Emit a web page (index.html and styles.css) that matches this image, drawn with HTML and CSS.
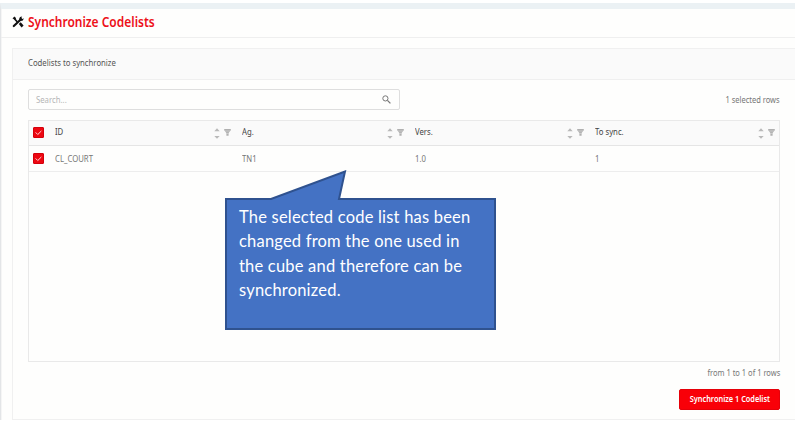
FILE: index.html
```html
<!DOCTYPE html>
<html lang="en">
<head>
<meta charset="utf-8">
<title>Synchronize Codelists</title>
<link rel="stylesheet" href="styles.css">
</head>
<body>
<svg class="defs" width="0" height="0">
  <symbol id="tools" viewBox="0 0 12 12"><path d="M2 2.2 5.4 6" stroke="#111" stroke-width="1.7"/><path d="M9 3.2 1.8 10" stroke="#111" stroke-width="2.2" stroke-linecap="round"/><path d="M.5 2.4 2.3.6 4 2 3.6 3.8Z" fill="#111"/><path d="M10.2.6 8 1 7 3.3 8.5 5 10.9 4.5 11.8 2.3 10.2 3.1 9.2 2.3Z" fill="#111"/><path d="m6.8 8 1.9-1.7 2.9 3.2-2 1.9Z" fill="#111"/></symbol>
  <symbol id="sort" viewBox="0 0 6 11"><path d="M.3 3.3 3 .2 5.7 3.3ZM.3 8 3 10.8 5.7 8Z" fill="#b9b9b9"/></symbol>
  <symbol id="filter" viewBox="0 0 7 7"><path d="M.2 0h6.6v1.3L4.6 4v2.7H2.4V4L.2 1.3Z" fill="#b0b0b0"/><path d="M1 2h5M2.2 4.4h2.6" stroke="#ddd" stroke-width=".6"/></symbol>
</svg>
<main class="page">
  <header class="title-bar">
    <svg class="tools"><use href="#tools"/></svg>
    <h1><span class="title-text">Synchronize Codelists</span></h1>
  </header>
  <section class="card">
    <div class="card-head"><span class="t">Codelists to synchronize</span></div>
    <div class="card-body">
      <div class="toolbar">
        <div class="search"><span class="t">Search...</span>
          <svg width="9" height="9" viewBox="0 0 9 9" fill="none" stroke="#777"><circle cx="3.4" cy="3.4" r="2.6"/><path d="m5.4 5.4 3 3" stroke-width="1.3"/></svg>
        </div>
        <span class="t right">1 selected rows</span>
      </div>
      <div class="table">
        <div class="row head">
          <div class="cell"><i class="check"><svg viewBox="0 0 11 11"><path d="M2 5.4 4.6 8 9 3.6"/></svg></i></div>
          <div class="cell"><span class="t">ID</span><svg class="sort"><use href="#sort"/></svg><svg class="filter"><use href="#filter"/></svg></div>
          <div class="cell"><span class="t">Ag.</span><svg class="sort"><use href="#sort"/></svg><svg class="filter"><use href="#filter"/></svg></div>
          <div class="cell"><span class="t">Vers.</span><svg class="sort"><use href="#sort"/></svg><svg class="filter"><use href="#filter"/></svg></div>
          <div class="cell"><span class="t">To sync.</span><svg class="sort"><use href="#sort"/></svg><svg class="filter"><use href="#filter"/></svg></div>
        </div>
        <div class="row">
          <div class="cell"><i class="check"><svg viewBox="0 0 11 11"><path d="M2 5.4 4.6 8 9 3.6"/></svg></i></div>
          <div class="cell"><span class="t">CL_COURT</span></div>
          <div class="cell"><span class="t">TN1</span></div>
          <div class="cell"><span class="t">1.0</span></div>
          <div class="cell"><span class="t">1</span></div>
        </div>
      </div>
      <div class="range"><span class="t right">from 1 to 1 of 1 rows</span></div>
      <div class="actions"><button><span class="t">Synchronize 1 Codelist</span></button></div>
    </div>
  </section>
</main>
<aside class="callout">
  <svg width="271" height="161" viewBox="0 0 271 161"><path d="M1 29H46L120 1.5 114 29H270V159H1Z" fill="#4472c4" stroke="#2f528f" stroke-width="2"/></svg>
  <p>The selected code list has been<br>changed from the one used in<br>the cube and therefore can be<br>synchronized.</p>
</aside>
</body>
</html>
```

FILE: styles.css
```css
* { box-sizing: border-box; }
body { margin: 0; width: 795px; height: 424px; overflow: hidden; background: #fff; padding-top: 3px; font: 9.5px/12px "Noto Sans", sans-serif; color: #777; position: relative; }
.defs { position: absolute; }
svg { display: block; flex: none; }
.page { height: 417px; border-top: 6px solid #ebf1f4; border-left: 1px solid #e3e5e7; background: #fefefd; box-shadow: inset 1px 0 #f5f5f5; }
.title-bar { display: flex; align-items: center; height: 29px; padding: 0 0 2px 11px; border-bottom: 1px solid #efefef; }
.tools { width: 12px; height: 12px; }
h1 { margin: 0 0 0 4px; font-size: 13.5px; line-height: 18px; font-weight: 600; color: #ed1019; }
.title-text { display: inline-block; white-space: nowrap; transform: scaleX(.887); transform-origin: left; }
.t { display: inline-block; white-space: nowrap; transform: scaleX(.815); transform-origin: left; }
.t.right { transform-origin: right; transform: scaleX(.79); }
.card { margin: 10px 0 0 11px; height: 372px; border: 1px solid #f0f0f0; border-right: 0; }
.card-head { height: 31px; display: flex; align-items: center; padding: 0 0 2px 15px; border-bottom: 1px solid #efefef; background: #fafafa; color: #555; }
.card-body { padding: 9px 15px 0; }
.toolbar { display: flex; justify-content: space-between; align-items: center; height: 21px; }
.search { width: 372px; height: 21px; padding: 0 8px 0 7px; border: 1px solid #dedede; border-radius: 2px; display: flex; align-items: center; justify-content: space-between; color: #b5b5b5; }
.table { margin-top: 10px; height: 242px; border: 1px solid #e9e9e9; }
.row { display: grid; grid-template-columns: 20px 187px 173px 180px 1fr; height: 26px; border-bottom: 1px solid #ededed; }
.row.head { height: 25px; background: #fafafa; border-bottom: 1px solid #e5e5e5; color: #444; }
.row.head .cell { padding-bottom: 2px; }
.cell { display: flex; align-items: center; padding: 0 5px 0 6px; }
.cell:first-child { padding-left: 4px; }
.cell:last-child { padding-right: 4px; }
.cell .t { margin-right: auto; }
.sort { width: 6px; height: 11px; margin: 3px 4px 0 0; }
.filter { width: 7px; height: 7px; }
.check { width: 11px; height: 11px; flex: none; background: #ed0711; border: 1px solid #d5000b; border-radius: 1px; }
.check svg { width: 9px; height: 9px; fill: none; stroke: #ffd9d9; stroke-width: 1.2; }
.range { display: flex; justify-content: flex-end; margin-top: 5px; }
.actions { display: flex; justify-content: flex-end; margin-top: 10px; }
button { width: 101px; height: 21px; padding: 0 0 1px; border: 1px solid #e60009; border-radius: 2px; background: #f90008; color: #fff; font: 600 9.5px/12px "Noto Sans", sans-serif; }
button .t { transform-origin: center; margin: 0 -10px; transform: scaleX(.775); }
.callout { position: absolute; left: 225px; top: 170px; width: 271px; height: 161px; color: #fff; }
.callout p { position: absolute; left: 14px; top: 35px; margin: 0; white-space: nowrap; font: 16.5px/24.4px Lato, sans-serif; letter-spacing: .2px; }
```
